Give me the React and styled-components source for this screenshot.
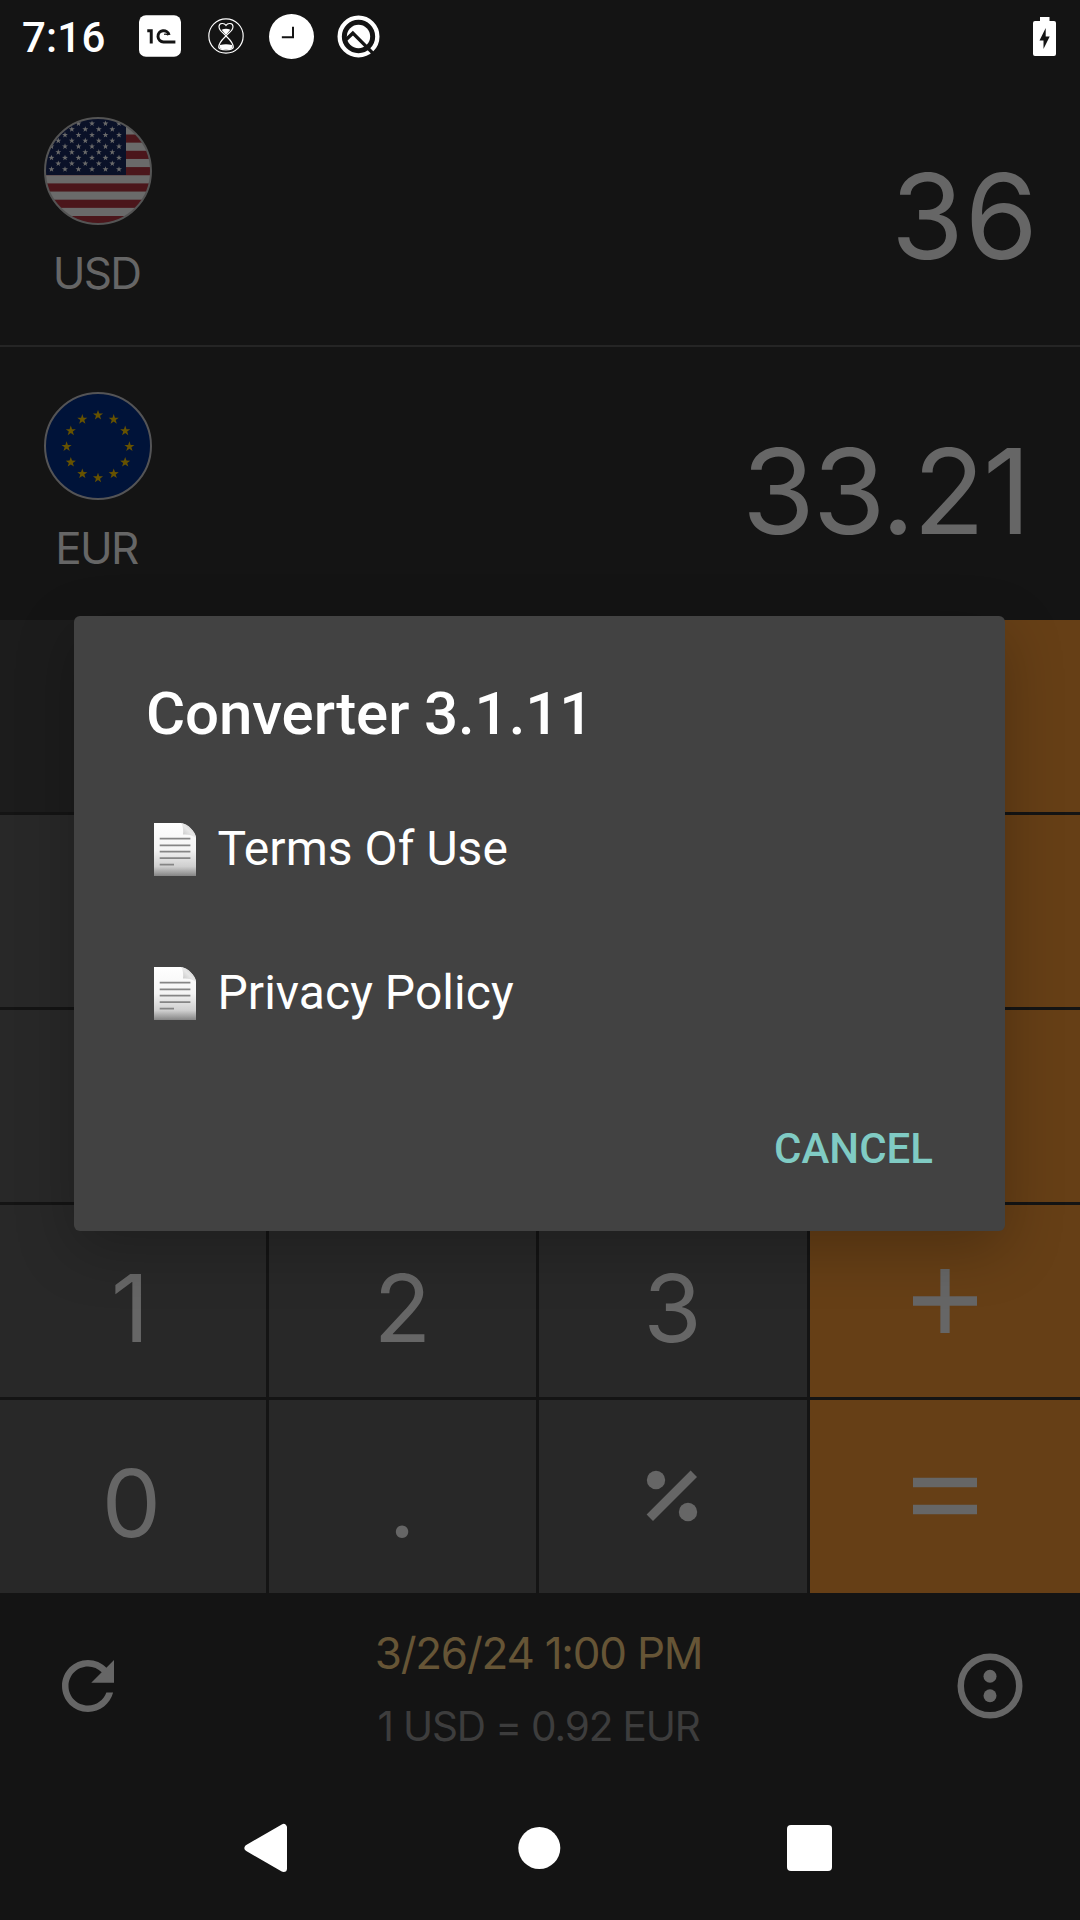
import React from 'react';
import styled, { createGlobalStyle } from 'styled-components';

const GlobalStyle = createGlobalStyle`
  * { box-sizing: border-box; }
  html, body { margin: 0; padding: 0; background: #141414; }
  svg { display: block; flex: none; }
`;

const Screen = styled.div`
  position: relative;
  display: flex;
  flex-direction: column;
  width: 1080px;
  height: 1920px;
  overflow: hidden;
  background: #141414;
  font-family: Inter, sans-serif;
  color: #666;
`;

/* ---------- status bar ---------- */

const StatusBar = styled.header`
  display: flex;
  align-items: center;
  justify-content: space-between;
  height: 72px;
  flex: none;
  padding: 0 24px 0 22px;
  color: #fff;
`;

const StatusGroup = styled.div`
  display: flex;
  align-items: center;
`;

const Time = styled.span`
  width: 116.5px;
  padding-top: 3px;
  font: 500 42px/48px Roboto, sans-serif;
  letter-spacing: 0.2px;
`;

const StatusIcon = styled.svg`
  width: ${(p) => p.$w}px;
  height: ${(p) => p.$h}px;
  margin-right: ${(p) => p.$gap || 0}px;
`;

/* ---------- currencies ---------- */

const CurrencyRow = styled.section`
  display: flex;
  justify-content: space-between;
  align-items: flex-start;
  height: ${(p) => (p.$divided ? 275 : 273)}px;
  flex: none;
  padding: 45px ${(p) => p.$padRight}px 0 43.5px;
  border-bottom: ${(p) => (p.$divided ? '2px solid #252525' : 'none')};
`;

const Currency = styled.div`
  display: flex;
  flex-direction: column;
  align-items: center;
  gap: 26px;
  width: 108px;
`;

const Code = styled.span`
  padding-right: 2px;
  font-size: 44px;
  line-height: 44px;
  letter-spacing: -1.7px;
`;

const Amount = styled.span`
  padding-top: 39px;
  font-size: 118px;
  line-height: 120px;
  letter-spacing: ${(p) => p.$track}px;
`;

/* ---------- keypad ---------- */

const Keypad = styled.main`
  display: grid;
  grid-template-columns: 266px 267px 268px 270px;
  grid-template-rows: repeat(4, 192px) 193px;
  gap: 3px;
  flex: none;
`;

const keyColors = { fn: '#1c1c1c', digit: '#282828', op: '#663f16' };

const Key = styled.div`
  display: flex;
  align-items: center;
  justify-content: center;
  padding: ${(p) => (p.$glyph ? '0' : '13px')} ${(p) => p.$nudge || 0}px ${(p) => (p.$glyph ? 1 : 0)}px 0;
  background: ${(p) => keyColors[p.$kind]};
  font-size: 94px;
  line-height: 1;
`;

/* ---------- footer ---------- */

const Footer = styled.footer`
  display: flex;
  justify-content: space-between;
  align-items: center;
  height: 183px;
  flex: none;
  padding: 3px 51px 0 49px;
`;

const RateInfo = styled.div`
  display: flex;
  flex-direction: column;
  align-items: center;
  align-self: flex-start;
  padding: 21px 1px 0 0;
`;

const UpdatedAt = styled.span`
  color: #665536;
  font-size: 44px;
  line-height: 72px;
  letter-spacing: -1.25px;
`;

const Rate = styled.span`
  color: #3d3d3d;
  font-size: 40.5px;
  line-height: 76px;
  letter-spacing: -1.14px;
`;

const NavBar = styled.nav`
  display: grid;
  grid-template-columns: repeat(3, 270px);
  place-content: center;
  place-items: center;
  height: 144px;
  flex: none;
`;

/* ---------- dialog ---------- */

const Overlay = styled.div`
  position: absolute;
  inset: 0;
  padding: 616px 75px 0 73.5px;
`;

const Dialog = styled.div`
  display: flex;
  flex-direction: column;
  height: 615px;
  padding-top: 63px;
  border-radius: 6px;
  background: #424242;
  box-shadow: 0 18px 60px rgba(0, 0, 0, 0.24);
  font-family: Roboto, sans-serif;
  color: #fff;
`;

const DialogTitle = styled.h1`
  margin: 0 0 28px;
  padding-left: 72.5px;
  font-size: 60px;
  font-weight: 500;
  line-height: 70px;
  letter-spacing: -0.1px;
`;

const DialogItem = styled.div`
  display: flex;
  align-items: center;
  gap: 21.5px;
  height: 144px;
  padding-left: 80.5px;
  font-size: 48px;
  line-height: 56px;
  letter-spacing: 0.05px;
`;

const DialogActions = styled.div`
  display: flex;
  flex: 1;
  align-items: center;
  justify-content: flex-end;
  padding: 2px 72px 0 0;
`;

const DialogButton = styled.button`
  padding: 0;
  border: 0;
  background: none;
  color: #80cbc4;
  font: 500 42px/48px Roboto, sans-serif;
`;

/* ---------- drawings ---------- */

const starPath = (cx, cy, r) =>
  Array.from({ length: 10 }, (_, i) => {
    const a = (Math.PI / 5) * i - Math.PI / 2;
    const q = i % 2 ? r * 0.4 : r;
    return `${i ? 'L' : 'M'}${(cx + q * Math.cos(a)).toFixed(2)} ${(cy + q * Math.sin(a)).toFixed(2)}`;
  }).join('') + 'Z';

const usStars = [];
for (let row = 0; row < 9; row += 1) {
  const odd = row % 2;
  for (let col = 0; col < (odd ? 5 : 6); col += 1) {
    usStars.push(starPath(7.5 + (odd ? 6.8 : 0) + col * 13.5, 52.3 - row * 5.72, 3.1));
  }
}

const UsFlag = () => (
  <svg width="108" height="108" viewBox="0 0 108 108">
    <clipPath id="usClip"><circle cx="54" cy="54" r="53" /></clipPath>
    <g clipPath="url(#usClip)">
      <rect width="108" height="108" fill="#6a6a6a" />
      {[0, 1, 2, 3, 4, 5, 6].map((i) => (
        <rect key={i} y={1.2 + i * 16.3} width="108" height="8.15" fill="#4b161b" />
      ))}
      <rect width="82" height="58" fill="#0a1128" />
      <path d={usStars.join('')} fill="#6a6a6a" />
    </g>
    <circle cx="54" cy="54" r="53" fill="none" stroke="#545454" strokeWidth="2" />
  </svg>
);

const EuFlag = () => (
  <svg width="108" height="108" viewBox="0 0 108 108">
    <circle cx="54" cy="54" r="53" fill="#001339" stroke="#545456" strokeWidth="2" />
    {Array.from({ length: 12 }, (_, i) => {
      const a = (Math.PI / 6) * i;
      return <path key={i} d={starPath(54 + 31.4 * Math.sin(a), 54.6 - 31.4 * Math.cos(a), 5.3)} fill="#665200" />;
    })}
  </svg>
);

const PageIcon = ({ id }) => (
  <svg width="42" height="53" viewBox="0 0 42 53">
    <defs>
      <linearGradient id={id} x1="0" y1="0" x2="0" y2="1">
        <stop offset="0" stopColor="#fff" />
        <stop offset="0.5" stopColor="#f4f4f4" />
        <stop offset="0.82" stopColor="#cfcfcf" />
        <stop offset="1" stopColor="#858585" />
      </linearGradient>
      <linearGradient id={`${id}Fold`} x1="0" y1="1" x2="1" y2="0">
        <stop offset="0" stopColor="#bdbdbd" />
        <stop offset="0.5" stopColor="#e8e8e8" />
        <stop offset="1" stopColor="#b5b5b5" />
      </linearGradient>
    </defs>
    <path d="M0 0H27C33 1 41 8 42 14V53H0Z" fill={`url(#${id})`} />
    <path d="M27.500 0C29 3 29.500 8 29 11.500C33 11 39 12 42 15C41 8 34 1 27.500 0Z" fill={`url(#${id}Fold)`} />
    <path d="M5.700 15.700H36.400M5.700 22.300H36.400M5.700 28.700H36.400M5.700 35.200H36.400M5.700 41.700H20" stroke="#858585" strokeWidth="1.800" />
  </svg>
);

const OneCIcon = () => (
  <StatusIcon $w={42} $h={42} $gap={27} viewBox="415 45 127 126">
    <rect x="415" y="45" width="127" height="126" rx="21" fill="#fff" />
    <path d="M440 92H452V131M506 105A17 17 0 1 0 489 126H525" fill="none" stroke="#141414" strokeWidth="9" />
    <path d="M503 105A12 12 0 0 0 491 103" fill="none" stroke="#141414" strokeWidth="4" />
  </StatusIcon>
);

const HourglassIcon = () => (
  <StatusIcon $w={36} $h={36} $gap={25.5} viewBox="623 54 108 108">
    <g fill="none" stroke="#fff" strokeWidth="3.500">
      <circle cx="677" cy="108" r="51.500" />
      <path d="M677 76C672 68 656 68 656 80C656 92 668 97 677 108C686 97 698 92 698 80C698 68 682 68 677 76Z" />
      <path d="M677 108C668 117 656 126 655 142Q655 149 677 150Q699 149 699 142C698 126 686 117 677 108Z" />
    </g>
    <path d="M664 89Q677 84 690 89L677 105ZM659 135Q677 130 695 135L697 145Q677 152 657 145Z" fill="#fff" />
  </StatusIcon>
);

const ClockIcon = () => (
  <StatusIcon $w={45} $h={45} $gap={22.5} viewBox="806.500 39.500 135 135">
    <circle cx="874" cy="107" r="67.500" fill="#fff" />
    <path d="M878.500 78V109.500H845" fill="none" stroke="#141414" strokeWidth="6" />
  </StatusIcon>
);

const QIcon = () => (
  <StatusIcon $w={43} $h={43} viewBox="1008.500 42.500 129 129">
    <circle cx="1073" cy="107" r="56.500" fill="none" stroke="#fff" strokeWidth="13" />
    <circle cx="1073" cy="107" r="35" fill="#fff" />
    <path d="M1036 116L1056 97L1119 160" fill="none" stroke="#141414" strokeWidth="10" />
  </StatusIcon>
);

const BatteryIcon = () => (
  <StatusIcon $w={23} $h={39} viewBox="0 0 23 39">
    <path d="M7 0H16.500V4H21Q23 4 23 6V37Q23 39 21 39H2Q0 39 0 37V6Q0 4 2 4H7Z" fill="#fff" />
    <path d="M12.700 11V19.500H16.700L10.500 32V23.500H6.500Z" fill="#141414" />
  </StatusIcon>
);

const OpIcon = ({ d }) => (
  <svg width="64" height="64" viewBox="0 0 64 64">
    <path d={d} fill="none" stroke="#666" strokeWidth="9.300" />
  </svg>
);

const PercentIcon = () => (
  <svg width="52" height="52" viewBox="0 0 52 52">
    <path d="M3.800 47.800L47.800 3.800" stroke="#666" strokeWidth="9" />
    <circle cx="10" cy="10" r="9.200" fill="#666" />
    <circle cx="42" cy="42" r="9.200" fill="#666" />
  </svg>
);

const RefreshIcon = () => (
  <svg width="78" height="78" viewBox="0 0 24 24" fill="#666">
    <path d="M17.650 6.350C16.200 4.900 14.210 4 12 4c-4.420 0-7.990 3.580-7.990 8s3.570 8 7.990 8c3.730 0 6.840-2.550 7.730-6h-2.080c-.820 2.330-3.040 4-5.650 4-3.310 0-6-2.690-6-6s2.690-6 6-6c1.660 0 3.140.690 4.220 1.780L13 11h7V4l-2.350 2.350z" />
  </svg>
);

const MoreIcon = () => (
  <svg width="78" height="78" viewBox="0 0 24 24" fill="#666">
    <circle cx="12" cy="12" r="9" fill="none" stroke="#666" strokeWidth="2" />
    <circle cx="12" cy="9" r="2" />
    <circle cx="12" cy="15" r="2" />
  </svg>
);

const NavIcon = ({ children }) => (
  <svg width="60" height="60" viewBox="0 0 60 60" fill="#fff">{children}</svg>
);

/* ---------- screen ---------- */

const keys = [
  ['fn', ''], ['fn', ''], ['fn', ''], ['op', ''],
  ['digit', '7'], ['digit', '8'], ['digit', '9'], ['op', ''],
  ['digit', '4'], ['digit', '5'], ['digit', '6'], ['op', ''],
  ['digit', '1', 6], ['digit', '2'], ['digit', '3', 1], ['op', 'plus'],
  ['digit', '0', 3], ['digit', '.', 1], ['digit', 'percent', 2], ['op', 'equals'],
];

const glyphs = {
  plus: <OpIcon d="M0 32H64M32 0V64" />,
  equals: <OpIcon d="M0 18.500H64M0 45.500H64" />,
  percent: <PercentIcon />,
};

export default function App() {
  return (
    <Screen>
      <GlobalStyle />
      <StatusBar>
        <StatusGroup>
          <Time>7:16</Time>
          <OneCIcon />
          <HourglassIcon />
          <ClockIcon />
          <QIcon />
        </StatusGroup>
        <BatteryIcon />
      </StatusBar>

      <CurrencyRow $divided $padRight={41}>
        <Currency><UsFlag /><Code>USD</Code></Currency>
        <Amount $track={1}>36</Amount>
      </CurrencyRow>
      <CurrencyRow $padRight={51}>
        <Currency><EuFlag /><Code>EUR</Code></Currency>
        <Amount $track={-2}>33.21</Amount>
      </CurrencyRow>

      <Keypad>
        {keys.map(([kind, label, nudge], i) => (
          <Key key={i} $kind={kind} $nudge={nudge} $glyph={Boolean(glyphs[label])}>
            {i < 12 ? null : glyphs[label] || label}
          </Key>
        ))}
      </Keypad>

      <Footer>
        <RefreshIcon />
        <RateInfo>
          <UpdatedAt>3/26/24 1:00 PM</UpdatedAt>
          <Rate>1 USD = 0.92 EUR</Rate>
        </RateInfo>
        <MoreIcon />
      </Footer>

      <NavBar>
        <NavIcon><path d="M8 30L43.500 9.500V50.500Z" stroke="#fff" strokeWidth="7" strokeLinejoin="round" /></NavIcon>
        <NavIcon><circle cx="29.300" cy="30" r="21" /></NavIcon>
        <NavIcon><rect x="7" y="7" width="45" height="46" rx="4" /></NavIcon>
      </NavBar>

      <Overlay>
        <Dialog>
          <DialogTitle>Converter 3.1.11</DialogTitle>
          <DialogItem><PageIcon id="terms" />Terms Of Use</DialogItem>
          <DialogItem><PageIcon id="privacy" />Privacy Policy</DialogItem>
          <DialogActions><DialogButton>CANCEL</DialogButton></DialogActions>
        </Dialog>
      </Overlay>
    </Screen>
  );
}
